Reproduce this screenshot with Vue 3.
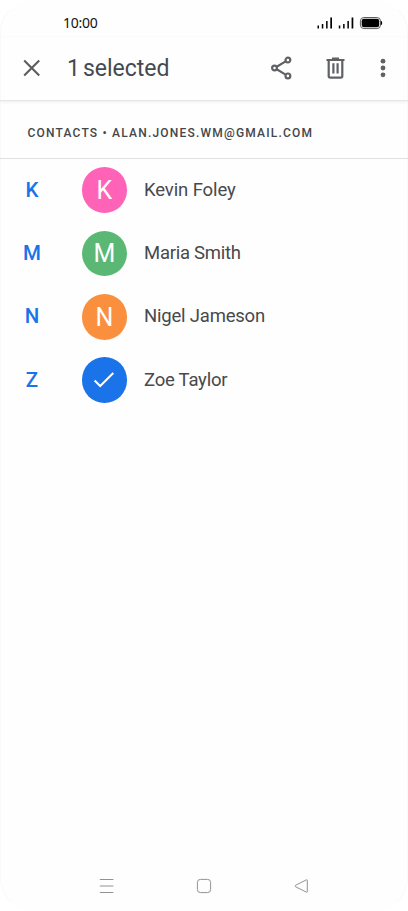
<script setup>
const contacts = [
  { letter: 'K', name: 'Kevin Foley', tone: 'pink', spacing: 'kevin' },
  { letter: 'M', name: 'Maria Smith', tone: 'green', spacing: 'maria' },
  { letter: 'N', name: 'Nigel Jameson', tone: 'orange', spacing: 'nigel' },
  { letter: 'Z', name: 'Zoe Taylor', tone: 'blue', spacing: 'zoe', selected: true },
]
</script>

<template>
  <div class="phone">
    <div class="screen">
      <div class="status">
        <span class="clock">10:00</span>
        <svg class="signals" width="66" height="14" viewBox="0 0 66 14">
          <g fill="#000">
            <path d="M.5 9.5H2V12.5H.5zM4.8 8H6.3V12.5H4.8zM9.1 5H10.6V12.5H9.1zM13.3 1.5H15V12.5H13.3z" />
            <path d="M21.8 9.5H23.3V12.5H21.8zM26.1 8H27.6V12.5H26.1zM30.4 5H31.9V12.5H30.4zM34.6 1.5H36.3V12.5H34.6z" />
            <rect x="44.7" y="2.8" width="17.5" height="8.5" rx="2.4" />
            <path d="M63.9 4.8Q65.2 5.2 65.2 7T63.9 9.2z" />
          </g>
          <rect x="43.4" y="1.5" width="20.1" height="11.1" rx="3.6" fill="none" stroke="#333" stroke-width=".8" />
        </svg>
      </div>
      <header class="toolbar">
        <svg class="close" width="18" height="18" viewBox="0 0 18 18" fill="none" stroke="#5b5d61" stroke-width="2.1">
          <path d="M1.2 1.5 16.2 16.5M16.2 1.5 1.2 16.5" />
        </svg>
        <h1><span class="count">1</span>selected</h1>
        <svg class="share" width="22" height="24" viewBox="0 0 22 24" fill="none" stroke="#5f6165" stroke-width="2.2">
          <path d="M5.7 10.7 14.2 5.6M5.7 13.3 14.2 18.4" />
          <circle cx="3.5" cy="12" r="2.4" />
          <circle cx="16.9" cy="4.1" r="2.4" />
          <circle cx="16.9" cy="19.9" r="2.4" />
        </svg>
        <svg class="trash" width="20" height="22" viewBox="0 0 20 22" fill="none" stroke="#5f6165" stroke-width="2.2">
          <path d="M.5 3H18.5M6 1.6H13M2.7 3V19Q2.7 20.6 4.3 20.6H14.7Q16.3 20.6 16.3 19V3M7.4 6.2V16.5M11.6 6.2V16.5" />
        </svg>
        <svg class="more" width="6" height="20" viewBox="0 0 6 20" fill="#5f6165">
          <circle cx="3" cy="3.2" r="2.4" /><circle cx="3" cy="10" r="2.4" /><circle cx="3" cy="16.8" r="2.4" />
        </svg>
      </header>
      <div class="account">CONTACTS • ALAN.JONES.WM@GMAIL.COM</div>
      <main class="list">
        <div v-for="c in contacts" :key="c.letter" class="row">
          <span class="index">{{ c.letter }}</span>
          <span class="avatar" :class="c.tone">
            <svg v-if="c.selected" width="22" height="18" viewBox="0 0 22 18" fill="none" stroke="#fff" stroke-width="2">
              <path d="M1.6 9.5 7.2 15 20.3 2" />
            </svg>
            <span v-else class="initial">{{ c.letter }}</span>
          </span>
          <span class="name" :class="c.spacing">{{ c.name }}</span>
        </div>
      </main>
      <nav class="navbar">
        <svg width="16" height="16" viewBox="0 0 16 16" stroke="#929292" fill="none"><path d="M.8 1.5H14.4M.8 8H14.4M.8 14.5H14.4" /></svg>
        <svg width="16" height="16" viewBox="0 0 16 16" stroke="#929292" fill="none"><rect x="1.4" y="1.4" width="13.2" height="13.2" rx="3" /></svg>
        <svg width="16" height="16" viewBox="0 0 16 16" stroke="#929292" fill="none"><path d="M14.3 2.4V13.6Q14.3 14.6 13.3 14.1L2.5 8.7Q1.4 8 2.5 7.3L13.3 1.9Q14.3 1.4 14.3 2.4Z" /></svg>
      </nav>
    </div>
  </div>
</template>

<style>
body { background: #fff; }
</style>

<style scoped>
.phone { width: 408px; height: 911px; background: #fff; overflow: hidden; font-family: Roboto, "Liberation Sans", sans-serif; }
.screen { display: flex; flex-direction: column; box-sizing: border-box; height: 911px; border: 1px solid #f9f9f9; border-top-color: #fff; border-bottom-color: #fefefe; border-radius: 32px; background: #fefefe; }
.status { display: flex; align-items: center; height: 36px; padding: 8px 24px 0 62px; box-sizing: border-box; }
.clock { font-family: "Noto Sans", sans-serif; font-size: 14px; line-height: 16px; letter-spacing: -.25px; color: #111; }
.signals { margin-left: auto; }
.toolbar { display: flex; align-items: center; height: 64px; box-sizing: border-box; border-bottom: 1px solid #e6e6e6; box-shadow: 0 1px 3px #00000012; margin: 0 -1px; padding: 0 0 1px 23px; }
.close { flex: none; }
h1 { width: 203px; margin: 0 0 0 27px; padding-top: 2px; font-size: 23px; line-height: 28px; font-weight: 400; color: #47494c; white-space: nowrap; }
.count { margin: 0 3px 0 -1px; }
.trash { margin-left: 33px; }
.more { margin-left: 34px; }
.share, .trash, .more { flex: none; }
.account { height: 58px; box-sizing: border-box; margin: 0 -1px; padding: 5px 0 0 27.5px; border-bottom: 1px solid #e0e0e0; font-size: 12px; font-weight: 500; line-height: 54px; letter-spacing: 1.2px; white-space: nowrap; color: #444649; }
.list { display: flex; flex-direction: column; margin: -.7px -1px 0; }
.row { display: flex; align-items: center; height: 63.4px; }
.index { width: 64px; text-align: center; font-size: 20.5px; font-weight: 500; color: #1a73e8; line-height: 24px; padding-bottom: 1px; }
.avatar { display: flex; align-items: center; justify-content: center; width: 45.6px; height: 45.6px; margin-left: 17.6px; border-radius: 50%; color: #fff; font-size: 25px; line-height: 30px; }
.initial { padding-top: 2px; }
.pink { background: #ff63b8; }
.green { background: #5bb874; }
.orange { background: #fa903e; }
.blue { background: #1a73e8; }
.name { margin-left: 16.8px; padding-bottom: 1px; font-size: 18.5px; line-height: 24px; color: #47494c; white-space: nowrap; }
.kevin { letter-spacing: -.11px; }
.maria { letter-spacing: -.26px; }
.nigel { letter-spacing: -.2px; }
.zoe { letter-spacing: -.22px; }
.navbar { display: flex; justify-content: space-between; margin-top: auto; padding: 0 98px 16px; }
</style>
